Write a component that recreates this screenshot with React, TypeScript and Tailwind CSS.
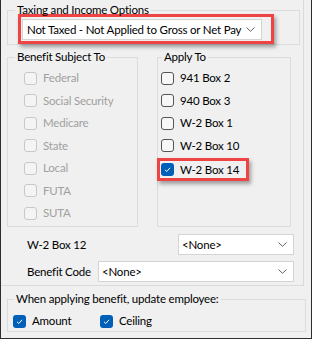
import React from "react";

const FONT = { fontFamily: "Lato, 'Liberation Sans', sans-serif" };

function Check({ checked = false, disabled = false }: { checked?: boolean; disabled?: boolean }) {
  if (checked) {
    return (
      <span className="flex h-[13px] w-[13px] shrink-0 items-center justify-center rounded-[3px] bg-[#005fb8]">
        <svg width="9" height="9" viewBox="0 0 9 9">
          <polyline points="2,4.8 3.8,6.5 7,2.8" fill="none" stroke="#ffffff" strokeWidth="1" />
        </svg>
      </span>
    );
  }
  return (
    <span
      className={
        disabled
          ? "block h-[13px] w-[13px] shrink-0 rounded-[3px] border border-[#c8c8c8] bg-[#f4f4f4]"
          : "block h-[13px] w-[13px] shrink-0 rounded-[3px] border border-[#555555] bg-[#f7f7f7]"
      }
    />
  );
}

function Chevron() {
  return (
    <svg width="9" height="5" viewBox="0 0 9 5" className="shrink-0">
      <polyline points="0.5,0.5 4.5,4.3 8.5,0.5" fill="none" stroke="#606060" strokeWidth="1" />
    </svg>
  );
}

function Row({ label, disabled = false, checked = false }: { label: string; disabled?: boolean; checked?: boolean }) {
  return (
    <div className="flex h-[22.5px] items-center gap-[6px]">
      <Check disabled={disabled} checked={checked} />
      <span className={disabled ? "whitespace-nowrap text-[#a0a0a0]" : "whitespace-nowrap text-black"}>{label}</span>
    </div>
  );
}

export default function App() {
  return (
    <div
      className="flex h-[339px] w-[312px] flex-col border-b border-l border-r border-[#2e2e2e] bg-[#f0f0f0] text-[11.5px] leading-[16px] tracking-[-0.2px] text-black"
      style={FONT}
    >
      {/* upper panel */}
      <div className="flex h-[286px] w-[303px] shrink-0 flex-col border-b border-r border-[#dadada]">
        {/* Taxing and Income Options */}
        <fieldset className="ml-[6px] mt-[2px] h-[43px] w-[293px] shrink-0 border border-[#dcdcdc]">
          <legend className="ml-[7px] whitespace-nowrap px-[2px]">Taxing and Income Options</legend>
          <div className="-mt-[4px] ml-[10px] h-[30px] w-[256px] border-[3px] border-[#ee4444] pl-[1px] pt-[2px] shadow-[2px_3px_4px_rgba(0,0,0,0.35)]">
            <div className="flex h-[21px] w-[240px] items-center justify-between border border-[#d4d4d4] bg-white pl-[4px] pr-[6px]">
              <span className="whitespace-nowrap">Not Taxed - Not Applied to Gross or Net Pay</span>
              <Chevron />
            </div>
          </div>
        </fieldset>

        {/* two groups */}
        <div className="mt-[4px] flex shrink-0">
          <fieldset className="ml-[6px] h-[178px] w-[131px] border border-[#dcdcdc]">
            <legend className="ml-[7px] whitespace-nowrap px-[2px]">Benefit Subject To</legend>
            <div className="pl-[16px] pt-[2px]">
              <Row label="Federal" disabled />
              <Row label="Social Security" disabled />
              <Row label="Medicare" disabled />
              <Row label="State" disabled />
              <Row label="Local" disabled />
              <Row label="FUTA" disabled />
              <Row label="SUTA" disabled />
            </div>
          </fieldset>
          <fieldset className="ml-[19px] h-[178px] w-[134px] border border-[#dcdcdc]">
            <legend className="ml-[4px] whitespace-nowrap px-[2px]">Apply To</legend>
            <div className="pl-[3px] pt-[2px]">
              <Row label="941 Box 2" />
              <Row label="940 Box 3" />
              <Row label="W-2 Box 1" />
              <Row label="W-2 Box 10" />
              <div className="flex h-[22.5px] items-center">
                <div className="-ml-[4px] mt-[3px] flex h-[23px] w-[92px] items-center gap-[6px] border-[3px] border-[#ee4444] pl-[1px] shadow-[2px_3px_4px_rgba(0,0,0,0.35)]">
                  <Check checked />
                  <span className="whitespace-nowrap">W-2 Box 14</span>
                </div>
              </div>
            </div>
          </fieldset>
        </div>

        {/* W-2 Box 12 */}
        <div className="mt-[7px] flex h-[21px] shrink-0 items-center pl-[26px]">
          <span className="whitespace-nowrap">W-2 Box 12</span>
          <div className="ml-auto mr-[9px] flex h-[21px] w-[116px] items-center justify-between border border-[#d4d4d4] bg-white pl-[3px] pr-[6px]">
            <span>&lt;None&gt;</span>
            <Chevron />
          </div>
        </div>

        {/* Benefit Code */}
        <div className="mt-[6px] flex h-[21px] shrink-0 items-center pl-[26px]">
          <span className="whitespace-nowrap">Benefit Code</span>
          <div className="ml-auto mr-[9px] flex h-[21px] w-[196px] items-center justify-between border border-[#d4d4d4] bg-white pl-[3px] pr-[6px]">
            <span>&lt;None&gt;</span>
            <Chevron />
          </div>
        </div>
      </div>

      {/* When applying benefit */}
      <fieldset className="ml-[6px] mt-[5px] h-[41px] w-[299px] shrink-0 border border-[#dcdcdc]">
        <legend className="ml-[6px] whitespace-nowrap px-[2px]">When applying benefit, update employee:</legend>
        <div className="mt-[2px] flex h-[24px] items-center pl-[5px]">
          <div className="flex w-[87px] items-center gap-[6px]">
            <Check checked />
            <span>Amount</span>
          </div>
          <div className="flex items-center gap-[6px]">
            <Check checked />
            <span>Ceiling</span>
          </div>
        </div>
      </fieldset>
    </div>
  );
}
